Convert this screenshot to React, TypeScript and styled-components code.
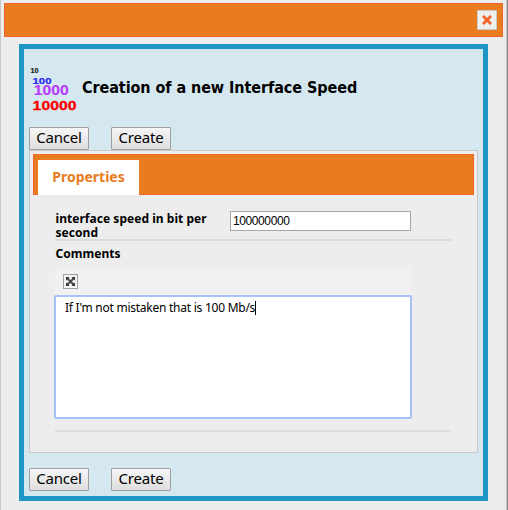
import React from 'react';
import styled, { createGlobalStyle } from 'styled-components';

const GlobalStyle = createGlobalStyle`
  * { box-sizing: border-box; }
  body { margin: 0; background: #ededed; color: #000; font-family: "Noto Sans", sans-serif; }
  button { font-family: inherit; padding: 0; margin: 0; }
`;

const Dialog = styled.div`
  width: 508px;
  height: 510px;
  padding: 3px 3px 0;
  overflow: hidden;
  background: #ededed;
  border-left: 1px solid #c8c8c8;
  border-right: 1px solid #858585;
  box-shadow: inset -1px 0 #c4c4c4;
`;

const TitleBar = styled.header`
  display: flex;
  justify-content: flex-end;
  width: 499px;
  height: 34px;
  padding: 6px 5px 0 0;
  background: #e87c1e;
  border: 1px solid #f4652a;
`;

const CloseButton = styled.button`
  display: flex;
  align-items: center;
  justify-content: center;
  width: 20px;
  height: 20px;
  background: #f0f0f0;
  border: 1px solid #c8c8c8;
`;

const Frame = styled.main`
  width: 469px;
  height: 457px;
  margin: 7px 0 0 15px;
  padding: 0 5px;
  background: #d5e8ef;
  border: 5px solid #1d96c6;
`;

const Heading = styled.div`
  display: flex;
  height: 78px;
`;

const SpeedIcon = styled.svg`
  width: 52px;
  height: 78px;
  flex: none;
  font-family: "Liberation Sans", Arial, sans-serif;
  font-weight: bold;
`;

const Title = styled.h1`
  margin: 27px 0 0 1px;
  font: bold 16px/24px "DejaVu Sans Condensed", "DejaVu Sans", sans-serif;
  font-stretch: condensed;
  letter-spacing: -0.07px;
  white-space: nowrap;
`;

const Actions = styled.div`
  display: flex;
  gap: 22px;
`;

const ActionButton = styled.button`
  width: 60px;
  height: 23px;
  padding-bottom: 2px;
  font-size: 15px;
  line-height: 19px;
  letter-spacing: -0.2px;
  color: #000;
  background: linear-gradient(#f6f6f6, #dedede);
  border: 1px solid #a0a0a0;
  border-radius: 1px;
`;

const Panel = styled.section`
  width: 449px;
  height: 303px;
  margin-bottom: 15px;
  padding: 3px;
  background: #ededed;
  border: 1px solid #c8c8c8;
`;

const TabBar = styled.nav`
  display: flex;
  width: 441px;
  height: 41px;
  padding: 5px 0 0 4px;
  background: #e87c1e;
  border: 1px solid #f4652a;
`;

const Tab = styled.div`
  width: 101px;
  height: 35px;
  background: #fff;
  color: #e87c1e;
  text-align: center;
  font: bold 14px/34px "Noto Sans", sans-serif;
`;

const Form = styled.div`
  width: 396px;
  margin: 16px 0 0 22px;
`;

const FieldRow = styled.div`
  display: flex;
  height: 30px;
  border-bottom: 2px solid #dcdcdc;
`;

const Label = styled.label`
  display: block;
  width: 175px;
  padding-left: 0.5px;
  font: bold 12px/14px "Noto Sans", sans-serif;
  letter-spacing: 0.04px;
  white-space: pre-line;
`;

const FieldLabel = styled(Label)`
  padding-top: 1px;
`;

const SpeedInput = styled.input`
  width: 181px;
  height: 20px;
  padding: 0 2px;
  background: #fff;
  border: 1px solid #a6a6a6;
  border-radius: 0;
  outline: none;
  color: #000;
  font: 12px "Liberation Sans", Arial, sans-serif;
  letter-spacing: -0.4px;
`;

const CommentField = styled.div`
  height: 191px;
  padding-top: 6px;
  border-bottom: 2px solid #dcdcdc;
`;

const Toolbar = styled.div`
  width: 356px;
  height: 27px;
  margin-top: 7px;
  padding: 6px 8px;
  background: #f1f1f1;
`;

const ExpandButton = styled.button`
  display: block;
  width: 15px;
  height: 15px;
  background: #f4f4f4;
  border: 1px solid #a0a0a0;
`;

const ExpandIcon = styled.svg`
  display: block;
  width: 13px;
  height: 13px;
`;

const Editor = styled.div`
  display: flex;
  width: 358px;
  height: 124px;
  margin-left: -1px;
  padding: 4px 9px;
  background: #fff;
  border: 2px solid #a4c3fa;
  border-radius: 2px;
  font: 12px/14px "Noto Sans", sans-serif;
  letter-spacing: -0.25px;
  white-space: nowrap;
`;

const Caret = styled.span`
  width: 1px;
  height: 14px;
  background: #000;
`;

const ButtonPair = () => (
  <Actions>
    <ActionButton>Cancel</ActionButton>
    <ActionButton>Create</ActionButton>
  </Actions>
);

export default function App() {
  return (
    <>
      <GlobalStyle />
      <Dialog>
        <TitleBar>
          <CloseButton aria-label="Close">
            <svg width="10" height="10" viewBox="0 0 10 10">
              <path d="M2 2 8 8M8 2 2 8" stroke="#f4652a" strokeWidth="2.9" strokeLinecap="square" />
            </svg>
          </CloseButton>
        </TitleBar>
        <Frame>
          <Heading>
            <SpeedIcon viewBox="0 0 52 78">
              <text x="1.5" y="23.8" fontSize="7" textLength="8" lengthAdjust="spacingAndGlyphs" fill="#222" stroke="#222" strokeWidth=".2">10</text>
              <text x="3.5" y="34.8" fontSize="9.5" textLength="19" lengthAdjust="spacingAndGlyphs" fill="#2727ee" stroke="#2727ee" strokeWidth=".2">100</text>
              <text x="4.8" y="46.3" fontSize="14" textLength="35" lengthAdjust="spacingAndGlyphs" fill="#b53bff" stroke="#b53bff" strokeWidth=".1">1000</text>
              <text x="3.6" y="61" fontSize="13.5" textLength="44" lengthAdjust="spacingAndGlyphs" fill="#fa0000" stroke="#fa0000" strokeWidth=".3">10000</text>
            </SpeedIcon>
            <Title>Creation of a new Interface Speed</Title>
          </Heading>
          <ButtonPair />
          <Panel>
            <TabBar><Tab>Properties</Tab></TabBar>
            <Form>
              <FieldRow>
                <FieldLabel htmlFor="speed">{'interface speed in bit per\nsecond'}</FieldLabel>
                <SpeedInput id="speed" defaultValue="100000000" />
              </FieldRow>
              <CommentField>
                <Label>Comments</Label>
                <Toolbar>
                  <ExpandButton aria-label="Expand">
                    <ExpandIcon viewBox="0 0 13 13">
                      <path d="M3 3 10 10M10 3 3 10" stroke="#444" strokeWidth="1.8" />
                      <path d="M2 2h3.5L2 5.5zM11 2v3.5L7.5 2zM2 11V7.5L5.5 11zM11 11H7.5L11 7.5z" fill="#333" />
                    </ExpandIcon>
                  </ExpandButton>
                </Toolbar>
                <Editor>If I'm not mistaken that is 100 Mb/s<Caret /></Editor>
              </CommentField>
            </Form>
          </Panel>
          <ButtonPair />
        </Frame>
      </Dialog>
    </>
  );
}
